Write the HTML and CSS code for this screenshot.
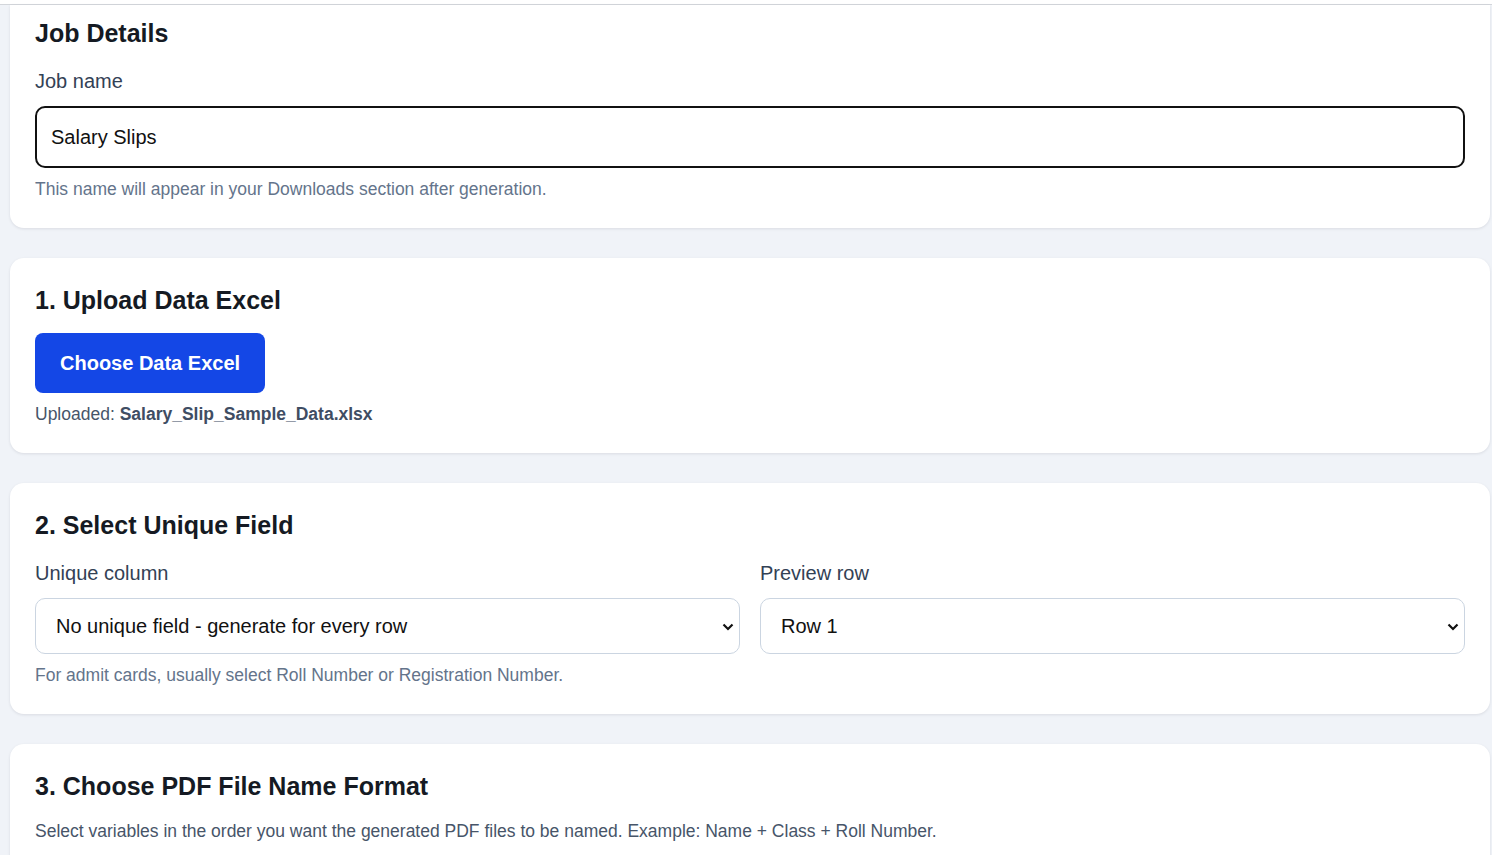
FILE: index.html
```html
<!DOCTYPE html>
<html lang="en">
<head>
<meta charset="utf-8">
<title>Job Details</title>
<link rel="stylesheet" href="styles.css">
</head>
<body>
<div class="topbar"></div>
<main class="page">
  <section class="card card-first">
    <h2 class="card-title">Job Details</h2>
    <label class="field-label" for="jobname">Job name</label>
    <div class="text-input" id="jobname">Salary Slips</div>
    <p class="help">This name will appear in your Downloads section after generation.</p>
  </section>

  <section class="card">
    <h2 class="card-title">1. Upload Data Excel</h2>
    <button class="primary-btn" type="button">Choose Data Excel</button>
    <p class="uploaded">Uploaded: <strong>Salary_Slip_Sample_Data.xlsx</strong></p>
  </section>

  <section class="card">
    <h2 class="card-title">2. Select Unique Field</h2>
    <div class="two-col">
      <div class="col">
        <label class="field-label">Unique column</label>
        <div class="select">
          <span>No unique field - generate for every row</span>
          <svg class="chev" width="12" height="8" viewBox="0 0 12 8"><path d="M1.5 1.5 L6 6 L10.5 1.5" fill="none" stroke="#111" stroke-width="2.2"/></svg>
        </div>
      </div>
      <div class="col">
        <label class="field-label">Preview row</label>
        <div class="select">
          <span>Row 1</span>
          <svg class="chev" width="12" height="8" viewBox="0 0 12 8"><path d="M1.5 1.5 L6 6 L10.5 1.5" fill="none" stroke="#111" stroke-width="2.2"/></svg>
        </div>
      </div>
    </div>
    <p class="help">For admit cards, usually select Roll Number or Registration Number.</p>
  </section>

  <section class="card">
    <h2 class="card-title">3. Choose PDF File Name Format</h2>
    <p class="desc">Select variables in the order you want the generated PDF files to be named. Example: Name + Class + Roll Number.</p>
  </section>
</main>
</body>
</html>
```

FILE: styles.css
```css
* { box-sizing: border-box; }
html, body {
  margin: 0;
  padding: 0;
  background: #f0f3f8;
  font-family: "Liberation Sans", Arial, sans-serif;
  color: #111827;
  overflow: hidden;
}
.topbar {
  height: 5px;
  background: #ffffff;
  border-bottom: 1px solid #d3d6db;
}
.page {
  display: flex;
  flex-direction: column;
  gap: 30px;
  padding: 0 2px 0 10px;
}
.card {
  background: #ffffff;
  border-radius: 14px;
  box-shadow: 0 1px 3px rgba(15, 23, 42, 0.10);
  padding: 25px 25px 26px 25px;
}
.card-first {
  border-radius: 0 0 14px 14px;
  padding-top: 11px;
}
.card-title {
  margin: 0;
  font-size: 25px;
  line-height: 35px;
  font-weight: 700;
  color: #151a23;
}
.field-label {
  display: block;
  font-size: 20px;
  line-height: 30px;
  color: #334155;
  margin-top: 15px;
  margin-bottom: 10px;
}
.text-input {
  height: 62px;
  border: 2px solid #111111;
  border-radius: 10px;
  padding: 0 14px;
  display: flex;
  align-items: center;
  font-size: 20px;
  color: #111111;
}
.help {
  margin: 8px 0 0;
  font-size: 17.5px;
  line-height: 27px;
  color: #64748b;
}
.primary-btn {
  margin-top: 15px;
  height: 60px;
  padding: 0 25px;
  border: none;
  border-radius: 8px;
  background: #1447e6;
  color: #ffffff;
  font-family: "Liberation Sans", Arial, sans-serif;
  font-size: 20px;
  font-weight: 700;
  cursor: pointer;
}
.uploaded {
  margin: 8px 0 0;
  font-size: 17.5px;
  line-height: 26px;
  color: #475569;
}
.uploaded strong {
  color: #3f4d63;
  font-weight: 700;
}
.two-col {
  display: grid;
  grid-template-columns: 1fr 1fr;
  column-gap: 20px;
}
.select {
  position: relative;
  height: 56px;
  border: 1px solid #cbd5e1;
  border-radius: 10px;
  padding: 0 20px;
  display: flex;
  align-items: center;
  font-size: 20px;
  color: #111111;
}
.chev {
  position: absolute;
  right: 5px;
  top: 24px;
}
.card-first .help,
.two-col + .help {
  margin-bottom: -1px;
}
.desc {
  margin: 14px 0 0;
  font-size: 17.5px;
  line-height: 26px;
  color: #475569;
}
```
